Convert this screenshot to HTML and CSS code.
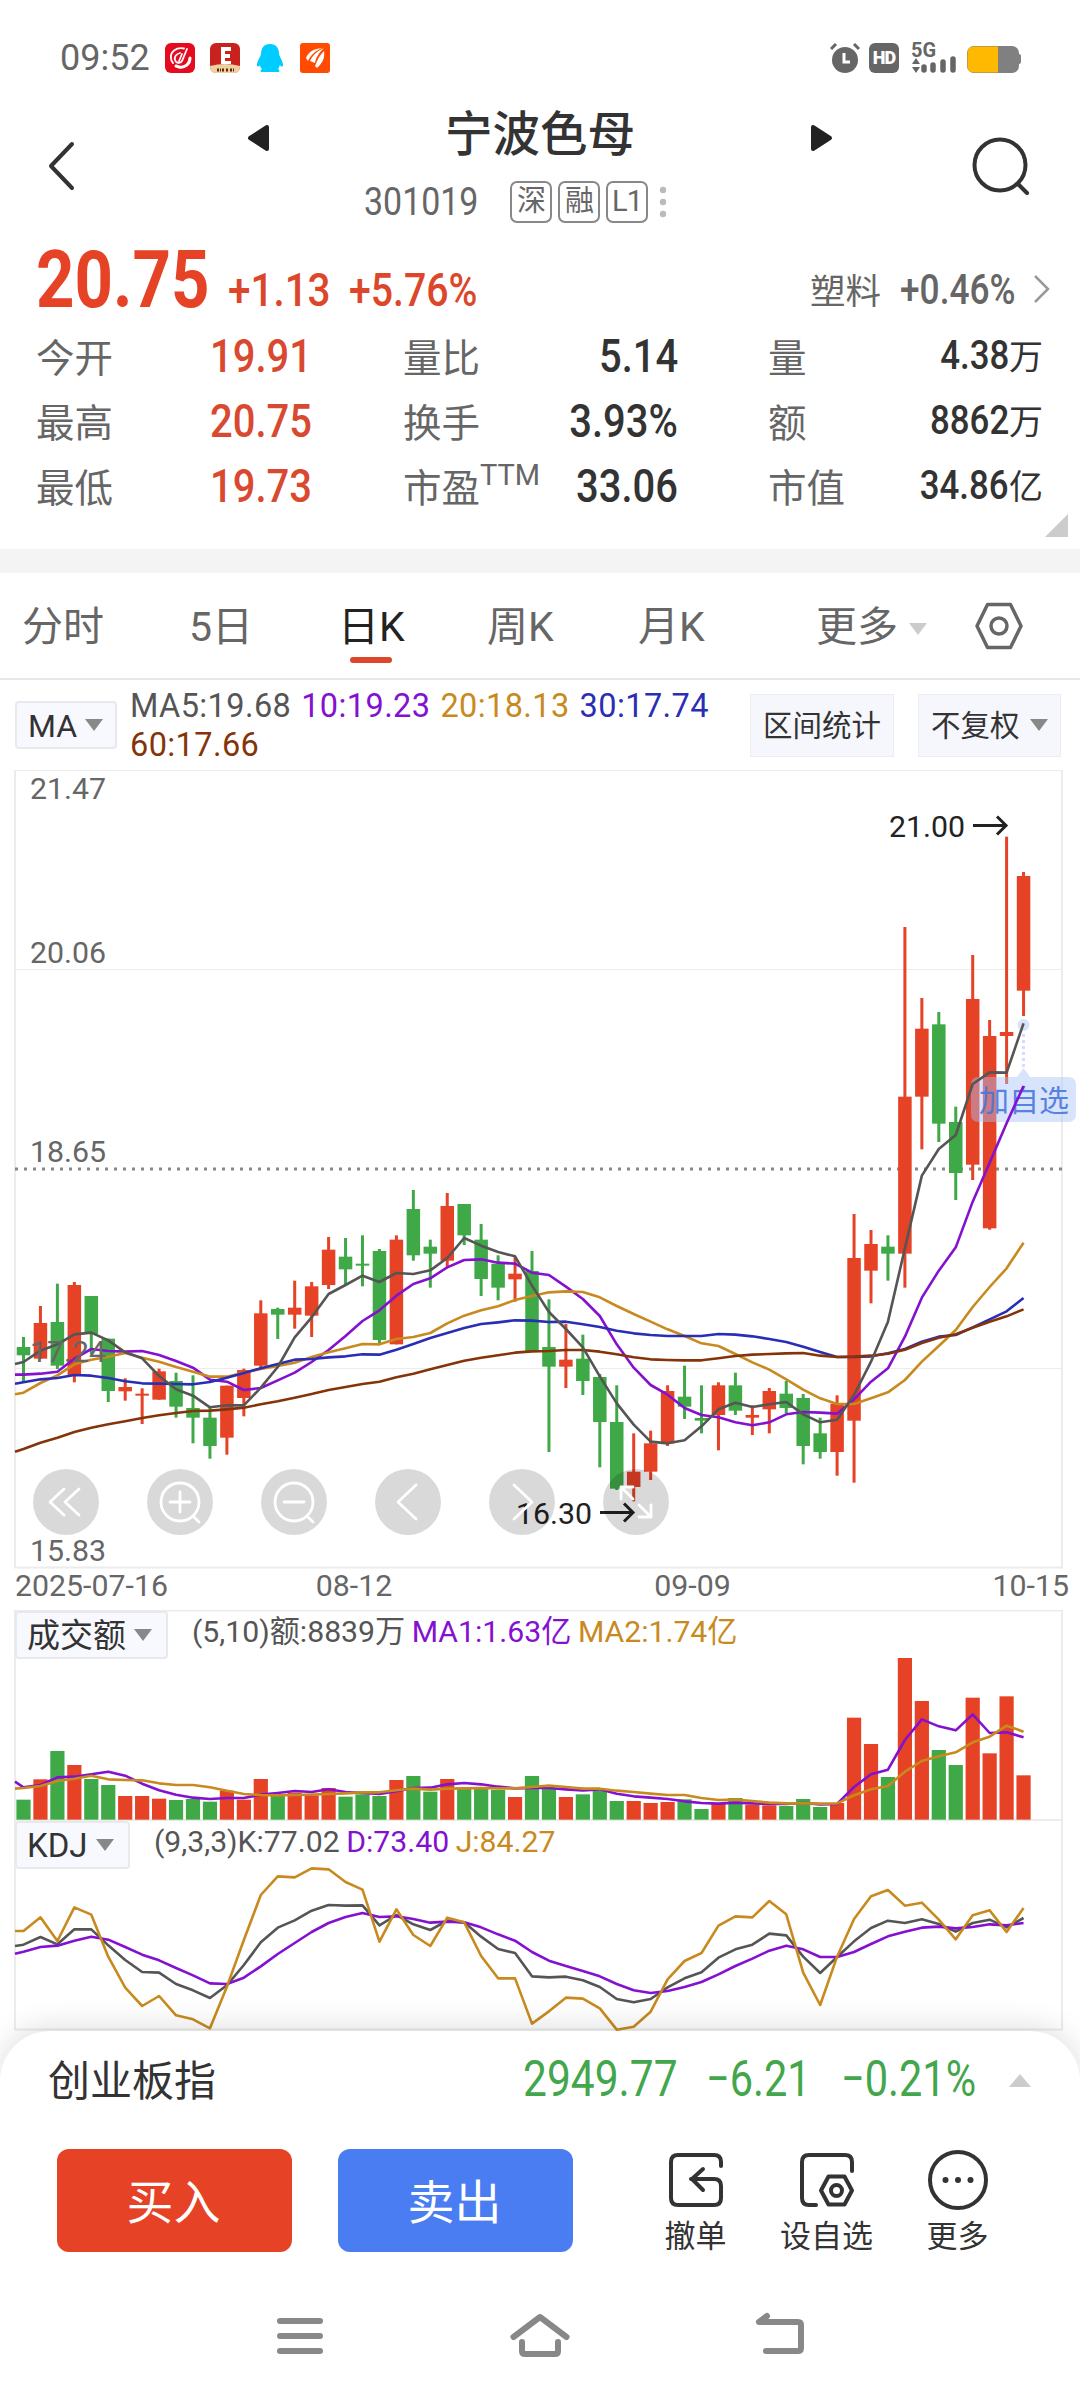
FILE: index.html
```html
<!DOCTYPE html>
<html lang="zh-CN">
<head>
  <meta charset="UTF-8" />
  <title>宁波色母 301019</title>
  <link rel="stylesheet" href="styles.css">
</head>
<body>
  <!-- system status bar -->
  <div class="status-bar">
    <span class="clock">09:52</span>
    <svg class="app-icon" viewBox="0 0 30 30">
      <rect width="30" height="30" rx="6" fill="#e60a1e"/>
      <g fill="none" stroke="#fff" stroke-width="1.800" stroke-linecap="round">
        <path d="M19 5.500C11 4 5 9 6 15c0 3 1 4 2 5"/>
        <path d="M15 10c-4 1-6 4-5 7s5 4 7 1l5-12"/>
        <path d="M17 11l-3 7"/>
        <path d="M25 15c0 6-5 10-11 9l-3-1" stroke-width="3"/>
      </g>
    </svg>
    <svg class="app-icon" viewBox="0 0 30 30">
      <rect width="30" height="30" rx="6" fill="#c9211e"/>
      <path d="M0 23q15-4 30 0v1q0 6-6 6H6q-6 0-6-6z" fill="#efd0a0"/>
      <path d="M11 4h10v4h-6v3h5v4h-5v3h6v3H11z" fill="#fff"/>
      <path d="M7 27h4m1 0h3m1 0h3m1 0h4" stroke="#5a2a10" stroke-width="3" stroke-dasharray="2 1"/>
    </svg>
    <svg class="app-icon" viewBox="0 0 30 30">
      <path d="M15 1c6 0 9 4 9 10 1 4 4 7 4 11 0 2-2 2-3 0-1 2-1 3-2 4 2 1 2 3 0 3H7c-2 0-2-2 0-3-1-1-2-2-2-4-1 2-3 2-3 0 0-4 3-7 4-11 0-6 3-10 9-10z" fill="#0cf"/>
    </svg>
    <svg class="app-icon" viewBox="0 0 30 30">
      <rect width="30" height="30" rx="3" fill="#ff4a00"/>
      <path d="M6 15C9 8 14 6 22 5c-7 3-11 7-14 13zM10 18c3-6 7-10 14-13-5 5-8 9-9 15zM15 23c2-4 3-9 9-15 1 6-1 12-7 17z" fill="#fff"/>
    </svg>
    <div class="status-right">
      <svg width="30" height="30" viewBox="0 0 30 30">
        <circle cx="15" cy="17" r="13" fill="#666"/>
        <path d="M1 6l5-5M29 6l-5-5" stroke="#666" stroke-width="3"/>
        <path d="M14 10v9h6" fill="none" stroke="#fff" stroke-width="3"/>
      </svg>
      <span class="hd">HD</span>
      <svg class="signal" width="46" height="42" viewBox="0 -12 46 42">
        <text x="0" y="14" font-size="20" font-weight="700" fill="#666">5G</text>
        <path d="M5 15l4 6H1zM5 30l4-6H1z" fill="#666"/>
        <path d="M13 24v3M22 22v5M32 19v8M42 16v11" stroke="#666" stroke-width="5.500" stroke-linecap="round"/>
      </svg>
      <svg width="56" height="30" viewBox="0 0 56 30">
        <rect x="1" y="3" width="52" height="27" rx="7" fill="#808080"/>
        <rect x="51" y="11" width="4" height="10" rx="2" fill="#808080"/>
        <path d="M32 3.500H8Q1.500 3.500 1.500 10v13q0 6.500 6.500 6.500h24z" fill="#ffb900"/>
      </svg>
    </div>
  </div>

  <header class="header">
    <svg class="back" width="30" height="50" viewBox="0 0 30 50">
      <path d="M26 3L5 25l21 22" fill="none" stroke="#333" stroke-width="4" stroke-linecap="round" stroke-linejoin="round"/>
    </svg>
    <div class="stock">
      <div class="stock-name">
        <svg width="22" height="28" viewBox="0 0 22 28"><path d="M20 3v22L3 14z" fill="#222" stroke="#222" stroke-width="4" stroke-linejoin="round"/></svg>
        <h1>宁波色母</h1>
        <svg width="22" height="28" viewBox="0 0 22 28"><path d="M2 3v22l17-11z" fill="#222" stroke="#222" stroke-width="4" stroke-linejoin="round"/></svg>
      </div>
      <div class="stock-code">
        <span class="code">301019</span>
        <span class="badge">深</span>
        <span class="badge">融</span>
        <span class="badge">L1</span>
        <svg width="8" height="32" viewBox="0 0 8 32" fill="#bbb"><circle cx="4" cy="4" r="3.200"/><circle cx="4" cy="16" r="3.200"/><circle cx="4" cy="28" r="3.200"/></svg>
      </div>
    </div>
    <svg class="search" width="60" height="62" viewBox="0 0 60 62">
      <circle cx="28" cy="29" r="25.500" fill="none" stroke="#333" stroke-width="4"/>
      <path d="M46 48l9 9" stroke="#333" stroke-width="4" stroke-linecap="round"/>
    </svg>
  </header>

  <section class="quote">
    <div class="price-row">
      <span class="price">20.75</span>
      <span class="change">+1.13</span>
      <span class="change percent">+5.76%</span>
      <span class="industry">塑料</span>
      <span class="industry-change">+0.46%</span>
      <svg width="18" height="30" viewBox="0 0 18 30"><path d="M2 2l13 13L2 28" fill="none" stroke="#999" stroke-width="2.500"/></svg>
    </div>
    <div class="stats">
      <div class="stat up"><span>今开</span><b>19.91</b></div>
      <div class="stat"><span>量比</span><b>5.14</b></div>
      <div class="stat small"><span>量</span><b>4.38</b><i>万</i></div>
      <div class="stat up"><span>最高</span><b>20.75</b></div>
      <div class="stat"><span>换手</span><b>3.93%</b></div>
      <div class="stat small"><span>额</span><b>8862</b><i>万</i></div>
      <div class="stat up"><span>最低</span><b>19.73</b></div>
      <div class="stat"><span>市盈<sup>TTM</sup></span><b>33.06</b></div>
      <div class="stat small"><span>市值</span><b>34.86</b><i>亿</i></div>
    </div>
    <div class="corner"></div>
  </section>

  <nav class="tabs">
    <span class="tab">分时</span>
    <span class="tab">5日</span>
    <span class="tab active">日K</span>
    <span class="tab">周K</span>
    <span class="tab">月K</span>
    <span class="tab more">更多<i class="caret light"></i></span>
    <svg width="50" height="50" viewBox="0 0 50 50" fill="none" stroke="#666" stroke-width="3.500" stroke-linejoin="round">
      <path d="M13.500 3.500h23L47 25 36.500 46.500h-23L3 25z"/>
      <circle cx="25" cy="25" r="8"/>
    </svg>
  </nav>

  <div class="ma-row">
    <div class="picker">MA<i class="caret"></i></div>
    <div class="ma-legend">
      <span class="c-grey">MA5:19.68</span>
      <span class="c-purple">10:19.23</span>
      <span class="c-gold">20:18.13</span>
      <span class="c-blue">30:17.74</span>
      <span class="c-brown">60:17.66</span>
    </div>
    <div class="tool-btn">区间统计</div>
    <div class="tool-btn">不复权<i class="caret"></i></div>
  </div>

  <div class="pane price-pane">
    <svg id="priceChart" width="1080" height="841" viewBox="0 -380 1080 841"></svg>
    <div class="chart-tools">
      <svg viewBox="0 0 66 66"><path d="M31 20L17 33l14 13M46 20L32 33l14 13"/></svg>
      <svg viewBox="0 0 66 66"><circle cx="33" cy="33" r="19"/><path d="M33 23v20M23 33h20M46 47l6 6"/></svg>
      <svg viewBox="0 0 66 66"><circle cx="33" cy="33" r="19"/><path d="M23 33h20M46 47l6 6"/></svg>
      <svg viewBox="0 0 66 66"><path d="M41 16L23 33l18 17"/></svg>
      <svg viewBox="0 0 66 66"><path d="M25 16l18 17-18 17"/></svg>
      <svg viewBox="0 0 66 66"><path d="M30 30L18 18M30 18H18v12M36 36l12 12M36 48h12V36"/></svg>
    </div>
  </div>

  <div class="pane volume-pane">
    <svg id="volumeChart" width="1080" height="210" viewBox="0 50 1080 210"></svg>
    <div class="pane-head">
      <div class="picker wide">成交额<i class="caret"></i></div>
      <div class="legend">
        <span class="c-grey">(5,10)额:8839万</span>
        <span class="c-purple">MA1:1.63亿</span>
        <span class="c-gold">MA2:1.74亿</span>
      </div>
    </div>
  </div>

  <div class="pane kdj-pane">
    <svg id="kdjChart" width="1080" height="211" viewBox="0 260 1080 211"></svg>
    <div class="pane-head">
      <div class="picker wide">KDJ<i class="caret"></i></div>
      <div class="legend">
        <span class="c-grey">(9,3,3)K:77.02</span>
        <span class="c-purple">D:73.40</span>
        <span class="c-gold">J:84.27</span>
      </div>
    </div>
  </div>

  <footer class="sheet">
    <div class="index-row">
      <span class="index-name">创业板指</span>
      <span class="index-num w1">2949.77</span>
      <span class="index-num w2">−6.21</span>
      <span class="index-num w3">−0.21%</span>
      <svg width="22" height="13" viewBox="0 0 22 13"><path d="M11 0l11 13H0z" fill="#ccc"/></svg>
    </div>
    <div class="actions">
      <button class="buy">买入</button>
      <button class="sell">卖出</button>
      <div class="action">
        <svg viewBox="0 0 60 60">
          <path d="M55 16v-4q0-7-7-7H12q-7 0-7 7v36q0 7 7 7h36q7 0 7-7V36q0-7-7-7H25"/>
          <path d="M37 19L26 29l11 11"/>
        </svg>
        撤单
      </div>
      <div class="action">
        <svg viewBox="0 0 60 60">
          <path d="M55 21v-9q0-7-7-7H12q-7 0-7 7v36q0 7 7 7h7"/>
          <path d="M31.500 26.500h16L55 40.500l-7.500 14h-16L24 40.500z"/>
          <circle cx="39.500" cy="40.500" r="5.500"/>
        </svg>
        设自选
      </div>
      <div class="action">
        <svg viewBox="0 0 60 60">
          <circle cx="30" cy="30" r="28"/>
          <g class="dots"><circle cx="17.500" cy="30" r="3"/><circle cx="30" cy="30" r="3"/><circle cx="42.500" cy="30" r="3"/></g>
        </svg>
        更多
      </div>
    </div>
    <div class="sys-nav">
      <svg viewBox="0 0 60 48"><path d="M10 9h40M10 24h40M10 39h40"/></svg>
      <svg viewBox="0 0 60 48"><path d="M3.500 25L30 5l26.500 20M12 30v9q0 3 3 3h30q3 0 3-3v-9"/></svg>
      <svg viewBox="0 0 60 48"><path d="M17 4l-8 6h39q3 0 3 3v23q0 3-3 3H16"/></svg>
    </div>
  </footer>

  <script src="charts.js"></script>
</body>
</html>
```

FILE: styles.css
```css
body {
  font-family: Roboto, "Noto Sans CJK SC", sans-serif;
  background: #fff;
  color: #333;
  margin: 0;
  width: 1080px;
  height: 2400px;
  overflow: hidden;
}

* {
  box-sizing: border-box;
}

svg {
  display: block;
  flex: none;
}

i {
  font-style: normal;
}

.c-grey { color: #555; }
.c-purple { color: #8410d0; }
.c-gold { color: #c88a1e; }
.c-blue { color: #2a2eb4; }
.c-brown { color: #843408; }

/* status bar */
.status-bar {
  display: flex;
  align-items: center;
  height: 116px;
  padding: 0 58px 0 60px;
}

.clock {
  width: 105px;
  font-size: 36px;
  color: #666;
}

.app-icon {
  width: 30px;
  height: 30px;
  margin-right: 15px;
}

.status-right {
  display: flex;
  align-items: center;
  gap: 9px;
  margin-left: auto;
}

.signal {
  margin-top: -12px;
}

.hd {
  width: 30px;
  height: 30px;
  border-radius: 6px;
  background: #666;
  color: #fff;
  font-size: 18px;
  font-weight: 900;
  line-height: 30px;
  text-align: center;
  letter-spacing: -1px;
  margin-right: 3px;
}

/* header */
.header {
  display: flex;
  height: 122px;
  padding: 0 48px 0 46px;
}

.back {
  margin-top: 25px;
}

.search {
  margin-top: 20px;
}

.stock {
  width: 586px;
  margin: 0 auto 0 171px;
}

.stock-name {
  display: flex;
  align-items: center;
  justify-content: space-between;
  height: 44px;
}

h1 {
  margin: -7px 0 0;
  font-size: 47.5px;
  font-weight: 500;
  line-height: 44px;
}

.stock-code {
  display: flex;
  align-items: center;
  height: 42px;
  padding-left: 117px;
  margin-top: 21px;
}

.code {
  width: 146px;
  font-size: 39px;
  color: #666;
  transform: scaleX(.87);
  transform-origin: left;
}

.badge {
  width: 42px;
  height: 42px;
  margin-right: 6px;
  border: 2px solid #888;
  border-radius: 7px;
  color: #666;
  font-size: 29px;
  line-height: 36px;
  text-align: center;
  letter-spacing: -1px;
}

.stock-code svg {
  margin-left: 5px;
}

/* quote */
.quote {
  height: 335px;
  padding: 0 24px 0 36px;
  border-bottom: 24px solid #f4f4f4;
}

.price-row {
  display: flex;
  align-items: center;
  height: 88px;
}

.price {
  width: 192px;
  font-size: 79px;
  font-weight: 700;
  color: #e64226;
  transform: scaleX(.85);
  transform-origin: left;
  margin-top: -5px;
}

.change {
  width: 121px;
  font-size: 47px;
  font-weight: 500;
  color: #dc472c;
  transform: scaleX(.86);
  transform-origin: left;
  margin-top: 14px;
}

.percent {
  width: 150px;
  transform: scaleX(.835);
}

.industry {
  width: 90px;
  margin-left: auto;
  margin-top: 12px;
  font-size: 35.5px;
  color: #666;
  white-space: nowrap;
}

.industry-change {
  width: 133px;
  font-size: 42.5px;
  font-weight: 500;
  color: #666;
  transform: scaleX(.83);
  transform-origin: left;
  margin-top: 14px;
}

.price-row svg {
  margin-top: 14px;
  margin-right: 5px;
}

.stats {
  display: grid;
  grid-template-columns: 367px 365px 275px;
  grid-auto-rows: 65px;
  margin-top: -3px;
}

.stat {
  display: flex;
  align-items: center;
}

.stat span {
  font-size: 38.5px;
  color: #666;
  margin: -2px auto 0 0;
  white-space: nowrap;
}

.stat sup {
  font-size: 29px;
  line-height: 0;
  vertical-align: 17px;
}

.stat b {
  font-size: 47px;
  font-weight: 500;
  transform: scaleX(.85);
  transform-origin: right;
  margin-right: 90px;
}

.stat.up b {
  width: 130px;
  text-align: center;
  color: #d9492f;
  transform-origin: center;
  margin-right: 77px;
}

.stat.small b {
  font-size: 41px;
  margin: -2px 0 0;
}

.stat i {
  font-size: 34px;
  margin-top: -2px;
}

.corner {
  width: 0;
  height: 0;
  margin: -4px -12px 0 auto;
  border-left: 23px solid transparent;
  border-bottom: 23px solid #ccc;
}

/* period tabs */
.tabs {
  display: flex;
  align-items: center;
  height: 107px;
  padding-left: 22px;
  border-bottom: 2px solid #e8e8e8;
}

.tab {
  width: 150px;
  font-size: 41px;
  color: #666;
  line-height: 106px;
  white-space: nowrap;
  padding-top: 2px;
}

.tab:first-child { width: 167px; }
.tab:nth-child(2) { width: 149px; }
.tab:nth-child(4) { width: 151px; }
.tab:nth-child(5) { width: 178px; }

.tab.active {
  position: relative;
  width: 149px;
  color: #222;
}

.active::after {
  content: "";
  position: absolute;
  left: 12px;
  bottom: 17px;
  width: 42px;
  height: 6px;
  border-radius: 3px;
  background: #dc472c;
}

.tab.more {
  width: 158px;
}

.caret {
  display: inline-block;
  border: 9px solid transparent;
  border-top: 12px solid #888;
  border-bottom: 0;
  margin-left: 8px;
  vertical-align: 6px;
}

.caret.light {
  border-top-color: #ccc;
  margin-left: 11px;
}

/* MA row */
.ma-row {
  display: flex;
  align-items: flex-start;
  height: 90px;
  padding: 0 18px 0 15px;
}

.picker {
  height: 48px;
  padding: 0 10px;
  border: 2px solid #e8e9ed;
  border-radius: 4px;
  background: #f8f9fe;
  font-size: 32px;
  line-height: 46px;
  white-space: nowrap;
}

.ma-row .picker {
  width: 102px;
  margin-top: 21px;
  padding-left: 11px;
}

.ma-legend {
  width: 600px;
  padding-top: 7px;
  margin-left: 13px;
  font-size: 32.5px;
  line-height: 39px;
  letter-spacing: .4px;
  word-spacing: 1.5px;
}

.tool-btn {
  height: 63px;
  margin-top: 14px;
  border: 1px solid #ececf2;
  background: #f6f7fd;
  font-size: 29.5px;
  line-height: 62px;
  padding: 0 12px;
  white-space: nowrap;
}

.ma-legend + .tool-btn {
  margin-left: 20px;
  margin-right: 24px;
}

.ma-row .picker .caret {
  vertical-align: 6px;
}

.tool-btn .caret {
  margin-left: 10px;
  vertical-align: 5px;
}

/* chart panes: the header and the tools share one grid cell with the svg */
.pane {
  display: grid;
}

.pane > * {
  grid-area: 1 / 1;
}

.price-pane { height: 840px; }
.volume-pane { height: 210px; }
.kdj-pane { height: 211px; }

.chart-tools {
  display: flex;
  align-items: flex-start;
  gap: 48px;
  padding: 699px 0 0 33px;
}

.chart-tools svg {
  width: 66px;
  height: 66px;
  border-radius: 50%;
  background: rgba(0, 0, 0, .15);
  fill: none;
  stroke: #fff;
  stroke-width: 2.8;
  stroke-linecap: round;
  stroke-linejoin: round;
}

.pane-head {
  display: flex;
  align-items: flex-start;
  padding: 1px 0 0 15px;
}

.picker.wide {
  width: 153px;
  font-size: 33px;
}

.kdj-pane .picker.wide {
  width: 115px;
}

.legend {
  margin-left: 24px;
  font-size: 30.2px;
  line-height: 41px;
  white-space: nowrap;
  word-spacing: -1px;
}

/* bottom sheet */
.sheet {
  position: relative;
  height: 369px;
  border-radius: 50px 50px 0 0;
  background: #fff;
  box-shadow: 0 -4px 30px rgba(0, 0, 0, .13);
}

.index-row {
  display: flex;
  align-items: center;
  height: 98px;
  padding: 0 49px 0 48px;
}

.index-name {
  font-size: 42px;
  margin: -6px auto 0 0;
}

.index-num {
  font-size: 50px;
  color: #43a64c;
  transform: scaleX(.83);
  transform-origin: left;
  white-space: nowrap;
  margin-top: -2px;
}

.w1 {
  width: 183px;
  transform: scaleX(.85);
}

.w2 { width: 135px; }
.w3 { width: 168px; }

.actions {
  display: flex;
  align-items: flex-start;
  padding: 20px 0 0 57px;
  height: 155px;
}

button {
  width: 235px;
  height: 103px;
  margin-right: 46px;
  border: none;
  border-radius: 12px;
  color: #fff;
  font-family: inherit;
  font-size: 47px;
  padding: 0 2px 4px 0;
}

.buy { background: #e64226; }
.sell { background: #4a7df2; margin-right: 57px; }

.action {
  display: flex;
  flex-direction: column;
  align-items: center;
  width: 131px;
  font-size: 31px;
  line-height: 40px;
}

.action svg {
  width: 60px;
  height: 60px;
  margin: 1px 0 7px;
  fill: none;
  stroke: #333;
  stroke-width: 4;
  stroke-linecap: round;
  stroke-linejoin: round;
}

.action .dots {
  fill: #333;
  stroke: none;
}

.sys-nav {
  display: flex;
  justify-content: center;
  gap: 180px;
  padding-top: 28px;
}

.sys-nav svg {
  width: 60px;
  height: 48px;
  fill: none;
  stroke: #888;
  stroke-width: 6;
  stroke-linecap: round;
  stroke-linejoin: round;
}
```

FILE: charts.js
```js
const RED = "#e64226";
const GREEN = "#3fa948";
const GRID = "#ececec";
const LEFT = 15, RIGHT = 1062;

// All series are stored in thirds of a pixel
const x = i => 23.5 + i * 16.95;
const y = v => v / 3;

// [high, body top, body bottom, low], "r" = up day, "g" = down day
const dirs = "grgrggrrrgggrrrgrrrgggrggrgggrggrgggrrrggrgrrgggrrrgrrggrrrr";
const candles = [
  [561,591,616,695],[468,519,626,626],[401,516,647,657],[396,405,678,697],[438,438,552,612],
  [566,566,723,756],[685,711,724,752],[715,731,735,822],[656,664,749,749],[668,693,770,803],
  [676,774,803,880],[772,803,888,926],[707,707,863,914],[656,660,744,799],[451,490,647,656],
  [473,477,494,567],[392,473,494,536],[396,409,497,561],[261,299,405,417],[264,320,358,402],
  [256,341,344,409],[297,303,570,579],[256,269,583,583],[120,177,316,332],[269,290,311,413],
  [129,168,332,350],[162,162,256,285],[222,269,387,438],[316,341,413,451],[320,371,388,455],
  [303,363,604,604],[448,591,650,906],[522,629,650,714],[554,626,693,735],[672,681,816,952],
  [706,816,1016,1020],[850,965,1011,1054],[842,880,965,990],[706,723,880,888],[647,740,770,807],
  [706,804,812,850],[697,706,795,901],[668,706,782,795],[766,795,803,855],[714,723,778,850],
  [693,731,774,790],[732,744,888,943],[803,850,906,926],[736,761,906,977],[192,324,812,998],
  [240,282,362,460],[256,290,311,392],[-669,-160,311,413],[-456,-364,-160,-2],[-414,-377,-79,-24],
  [-130,-84,69,150],[-585,-453,44,90],[-390,-342,235,239],[-940,-354,-342,-198],[-834,-822,-478,-402]
];

// first value is where the line enters at the left edge
const ma = {
  "#8410d0": [674,674,671,665,626,597,603,605,603,615,633,653,689,695,720,714,691,668,636,600,558,513,481,437,402,385,352,330,328,338,341,368,375,410,447,498,583,653,705,734,774,795,802,817,826,817,793,786,788,791,748,695,655,560,443,362,292,155,38,-80,-192],
  "#c88a1e": [733,728,699,676,643,629,620,609,623,635,651,665,680,680,668,657,648,638,621,607,595,582,583,567,561,549,520,497,481,469,450,438,427,424,426,442,468,492,515,538,558,580,588,612,637,659,688,719,745,762,762,745,727,690,635,588,540,471,411,355,278],
  "#2a2eb4": [701,697,688,684,675,677,684,694,700,701,702,703,696,683,669,655,642,629,627,622,619,613,614,599,582,564,549,534,522,517,511,512,516,515,523,531,542,550,555,558,558,558,552,554,559,567,576,590,606,621,621,619,610,597,575,560,555,532,508,484,444],
  "#843408": [905,897,878,863,846,833,823,814,804,796,789,783,782,778,773,763,754,743,732,720,711,702,695,682,671,658,645,632,623,616,608,604,603,600,600,605,613,622,628,630,631,631,625,618,614,612,610,609,617,621,620,617,611,599,579,563,553,533,515,499,478],
  "#555": [642,636,602,583,553,548,571,607,625,678,718,737,772,766,766,713,651,562,502,432,405,377,396,369,372,361,324,264,287,306,319,407,486,537,592,679,760,824,875,880,871,829,778,758,771,763,756,793,817,809,735,635,515,295,77,-3,-45,-198,-233,-232,-380]
};

const volumes = [719,658,573,615,657,675,708,708,716,720,717,725,692,719,657,703,698,706,684,710,703,708,660,648,695,657,683,685,690,711,648,686,711,703,692,723,723,729,726,718,747,732,714,734,736,738,717,741,729,473,552,651,294,423,570,615,413,580,409,646];
const volumeMa = {
  "#8410d0": [665,682,675,652,650,643,635,647,671,691,704,713,717,714,714,704,699,693,696,688,696,699,702,694,684,683,673,669,673,680,685,684,684,688,691,688,701,709,713,717,724,729,731,728,730,732,732,729,733,732,681,643,629,540,478,499,511,463,519,517,532],
  "#c88a1e": [686,684,678,663,656,647,658,660,661,670,675,675,682,692,702,705,706,705,704,702,700,697,697,691,686,689,686,685,684,685,685,681,677,681,686,686,692,696,701,705,705,714,720,719,723,728,730,730,731,730,706,688,678,635,603,589,577,547,530,497,515]
};

const kdj = {
  "#555": [1158,1154,1131,1153,1108,1108,1156,1200,1236,1238,1272,1291,1314,1276,1215,1147,1103,1081,1052,1035,1037,1036,1096,1065,1093,1110,1082,1087,1130,1167,1179,1249,1252,1250,1261,1281,1317,1327,1317,1282,1255,1237,1193,1168,1154,1121,1126,1190,1239,1191,1144,1104,1082,1089,1078,1092,1115,1089,1079,1102,1074],
  "#8410d0": [1181,1175,1161,1157,1142,1130,1139,1161,1184,1201,1224,1246,1270,1272,1253,1219,1182,1149,1116,1089,1071,1059,1071,1069,1077,1088,1085,1087,1102,1123,1142,1176,1202,1218,1233,1249,1272,1291,1299,1293,1281,1266,1243,1218,1196,1172,1157,1168,1191,1191,1176,1152,1129,1115,1103,1100,1105,1101,1093,1096,1089],
  "#c88a1e": [1113,1113,1072,1143,1042,1064,1190,1283,1338,1308,1366,1378,1405,1280,1140,1005,949,952,925,928,966,989,1145,1048,1125,1158,1073,1087,1188,1255,1255,1391,1354,1313,1316,1345,1409,1400,1355,1258,1203,1179,1097,1069,1072,1023,1063,1238,1335,1190,1077,1009,990,1037,1028,1079,1138,1066,1051,1116,1044]
};

const color = i => dirs[i] === "r" ? RED : GREEN;

function rect(cx, w, top, bottom, fill) {
  const h = Math.max(y(bottom) - y(top), 2);
  return `<rect x="${(cx - w / 2).toFixed(2)}" y="${y(top).toFixed(2)}" width="${w}" height="${h.toFixed(2)}" fill="${fill}"/>`;
}

function lines(set) {
  return Object.entries(set).map(([stroke, vals]) => {
    const pts = vals.map((v, i) => `${i === 0 ? LEFT : x(i - 1)},${y(v)}`).join(" ");
    return `<polyline points="${pts}" fill="none" stroke="${stroke}" stroke-width="2.6" stroke-linejoin="round"/>`;
  }).join("");
}

function frame(top, bottom) {
  return `<rect x="${LEFT}" y="${top}" width="${RIGHT - LEFT}" height="${bottom - top}" fill="none" stroke="${GRID}" stroke-width="2"/>`;
}

function label(tx, ty, text, fill = "#666", anchor = "start") {
  return `<text x="${tx}" y="${ty}" font-size="30.3" fill="${fill}" text-anchor="${anchor}">${text}</text>`;
}

function arrow(ax, ay) {
  return `<path d="M${ax} ${ay}h33m-9 -9l9 9l-9 9" fill="none" stroke="#222" stroke-width="3"/>`;
}

function drawPrice() {
  let s = frame(-380, 417.5);
  s += `<path d="M${LEFT} -180.5H${RIGHT}M${LEFT} 218.5H${RIGHT}" stroke="${GRID}"/>`;
  s += `<path d="M${LEFT} 19H${RIGHT}" stroke="#888" stroke-width="3" stroke-dasharray="3 6"/>`;
  candles.forEach(([high, top, bottom, low], i) => {
    s += rect(x(i), 3, high, low, color(i));
    s += rect(x(i), 13.5, top, bottom, color(i));
  });

  // add-to-watchlist marker
  s += `<g fill="#c8d8fa" fill-opacity=".7">
    <circle cx="1023.5" cy="-125" r="6"/>
    <path d="M1017 -73l6.5 -9l6.5 9z"/>
    <rect x="971" y="-73" width="105" height="45" rx="7" fill="#a9c2f8" fill-opacity=".45"/>
  </g>
  <path d="M1023.5 -116v34" stroke="#d3defa" stroke-width="3" stroke-dasharray="3 3"/>`;
  s += `<text x="979" y="-39" font-size="30" fill="#4674dc" fill-opacity=".9">加自选</text>`;

  s += lines(ma);
  s += label(30, -351, "21.47") + label(30, -187, "20.06") + label(30, 12, "18.65")
    + label(30, 211.5, "17.24") + label(30, 410.5, "15.83");
  s += label(15, 446, "2025-07-16") + label(354, 446, "08-12", "#666", "middle")
    + label(692.5, 446, "09-09", "#666", "middle") + label(1069, 446, "10-15", "#666", "end");
  s += label(889, -313, "21.00", "#222") + arrow(973, -324.5);
  s += label(516, 373.5, "16.30", "#222") + arrow(600, 362.5);
  document.getElementById("priceChart").innerHTML = s;
}

function drawVolume() {
  let s = frame(50.5, 260);
  volumes.forEach((v, i) => {
    s += rect(x(i), 14.2, v, 779, color(i));
  });
  document.getElementById("volumeChart").innerHTML = s + lines(volumeMa);
}

function drawKdj() {
  document.getElementById("kdjChart").innerHTML = frame(260, 469.5) + lines(kdj);
}

drawPrice();
drawVolume();
drawKdj();
```
